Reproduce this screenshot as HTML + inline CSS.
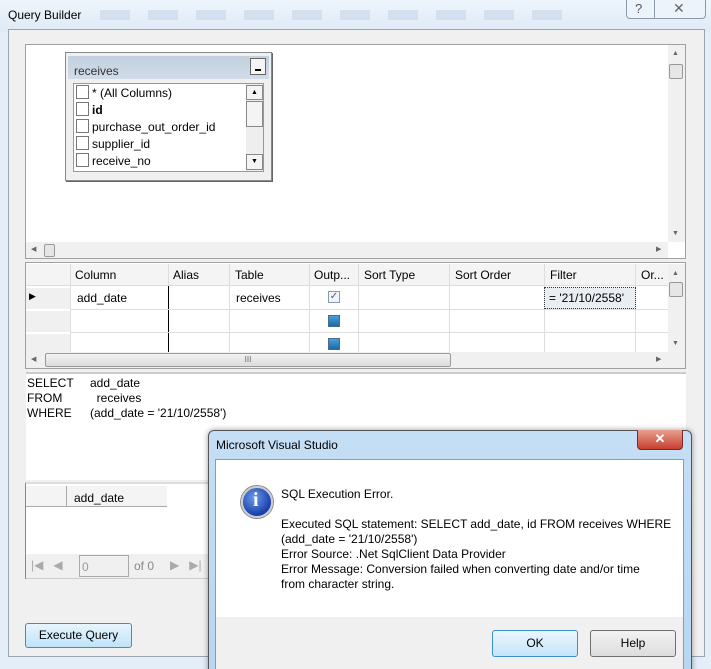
<!DOCTYPE html>
<html><head><style>
*{margin:0;padding:0;box-sizing:border-box}
html,body{width:711px;height:669px;overflow:hidden}
body{background:#e4eef8;font-family:"Liberation Sans",sans-serif;font-size:12px;color:#000;position:relative}
.a{position:absolute}
.t{white-space:nowrap}
</style></head><body>
<!-- title bar -->
<div class="a" style="left:0;top:0;width:711px;height:32px;background:linear-gradient(#eef5fc,#dfeaf6)"></div>
<div class="a t" style="left:8px;top:8px;font-size:12px">Query Builder</div>
<div class="a" style="left:100px;top:10px;width:480px;height:10px;background:repeating-linear-gradient(90deg,#cfdcec 0 30px,transparent 30px 48px);opacity:.8"></div>
<div class="a" style="left:626px;top:0;width:80px;height:19px;border:1px solid #8a9aaa;border-top:none;border-radius:0 0 4px 4px;background:#edf3fa"></div>
<div class="a" style="left:654px;top:0;width:1px;height:19px;background:#8a9aaa"></div>
<div class="a t" style="left:635px;top:1px;font-size:13px;color:#555">?</div>
<div class="a t" style="left:673px;top:0px;font-size:14px;color:#666">✕</div>
<!-- client -->
<div class="a" style="left:8px;top:29px;width:697px;height:628px;background:#f0f0f0;border:1px solid #9aa5b0"></div>
<!-- diagram pane -->
<div class="a" style="left:25px;top:44px;width:661px;height:215px;background:#fff;border:1px solid #a0a0a0"></div>
<div class="a" style="left:668px;top:45px;width:17px;height:197px;background:#f0f0f0"></div>
<div class="a" style="left:669px;top:64px;width:14px;height:15px;background:#e6e6e6;border:1px solid #999;border-radius:2px"></div>
<div class="a" style="left:26px;top:242px;width:642px;height:16px;background:#f0f0f0"></div>
<div class="a" style="left:44px;top:244px;width:11px;height:13px;background:#e6e6e6;border:1px solid #999;border-radius:2px"></div>
<div class="a t" style="left:672px;top:50px;font-size:7px;color:#666">▲</div>
<div class="a t" style="left:672px;top:230px;font-size:7px;color:#666">▼</div>
<div class="a t" style="left:31px;top:245px;font-size:7px;color:#666">◀</div>
<div class="a t" style="left:656px;top:245px;font-size:7px;color:#666">▶</div>
<!-- table box -->
<div class="a" style="left:65px;top:52px;width:207px;height:129px;background:#f0f0f0;border:1px solid #888;box-shadow:1px 1px 0 #666"></div>
<div class="a" style="left:68px;top:56px;width:201px;height:23px;background:linear-gradient(#c2d0df,#d1dce8)"></div>
<div class="a t" style="left:74px;top:64px;color:#333">receives</div>
<div class="a" style="left:250px;top:58px;width:16px;height:17px;background:#f4f4f4;border:1px solid #666"></div>
<div class="a" style="left:255px;top:69px;width:6px;height:2px;background:#000"></div>
<div class="a" style="left:73px;top:83px;width:191px;height:89px;background:#fff;border:1px solid #999"></div>
<div class="a" style="left:246px;top:84px;width:17px;height:87px;background:#eee"></div>
<div class="a" style="left:246px;top:85px;width:17px;height:15px;background:#f4f4f4;border:1px solid #888;font-size:7px;text-align:center;line-height:13px">▲</div>
<div class="a" style="left:246px;top:101px;width:17px;height:26px;background:#f4f4f4;border:1px solid #888"></div>
<div class="a" style="left:246px;top:154px;width:17px;height:16px;background:#f4f4f4;border:1px solid #888;font-size:7px;text-align:center;line-height:14px">▼</div>
<div class="a" style="left:76px;top:85px;width:13px;height:14px;border:1px solid #777"></div>
<div class="a" style="left:76px;top:102px;width:13px;height:14px;border:1px solid #777"></div>
<div class="a" style="left:76px;top:119px;width:13px;height:14px;border:1px solid #777"></div>
<div class="a" style="left:76px;top:136px;width:13px;height:14px;border:1px solid #777"></div>
<div class="a" style="left:76px;top:153px;width:13px;height:14px;border:1px solid #777"></div>
<div class="a t" style="left:92px;top:86px">* (All Columns)</div>
<div class="a t" style="left:92px;top:103px;font-weight:bold">id</div>
<div class="a t" style="left:92px;top:120px">purchase_out_order_id</div>
<div class="a t" style="left:92px;top:137px">supplier_id</div>
<div class="a t" style="left:92px;top:154px">receive_no</div>
<!-- grid pane -->
<div class="a" style="left:25px;top:262px;width:661px;height:107px;background:#fff;border:1px solid #a0a0a0"></div>
<div class="a" style="left:26px;top:264px;width:643px;height:22px;background:#f4f4f4;border-bottom:1px solid #ddd"></div>
<div class="a" style="left:26px;top:286px;width:44px;height:66px;background:repeating-linear-gradient(#fff 0 2px,#f0f0f0 2px 23px)"></div>
<div class="a" style="left:70px;top:264px;width:1px;height:88px;background:#ddd"></div>
<div class="a" style="left:168px;top:286px;width:1px;height:66px;background:#000"></div>
<div class="a" style="left:168px;top:264px;width:1px;height:22px;background:#ddd"></div>
<div class="a" style="left:229px;top:264px;width:1px;height:88px;background:#ddd"></div>
<div class="a" style="left:309px;top:264px;width:1px;height:88px;background:#ddd"></div>
<div class="a" style="left:358px;top:264px;width:1px;height:88px;background:#ddd"></div>
<div class="a" style="left:449px;top:264px;width:1px;height:88px;background:#ddd"></div>
<div class="a" style="left:544px;top:264px;width:1px;height:88px;background:#ddd"></div>
<div class="a" style="left:635px;top:264px;width:1px;height:88px;background:#ddd"></div>
<div class="a" style="left:70px;top:309px;width:598px;height:1px;background:#ddd"></div>
<div class="a" style="left:70px;top:332px;width:598px;height:1px;background:#ddd"></div>
<div class="a t" style="left:75px;top:268px">Column</div>
<div class="a t" style="left:173px;top:268px">Alias</div>
<div class="a t" style="left:235px;top:268px">Table</div>
<div class="a t" style="left:314px;top:268px">Outp...</div>
<div class="a t" style="left:364px;top:268px">Sort Type</div>
<div class="a t" style="left:455px;top:268px">Sort Order</div>
<div class="a t" style="left:550px;top:268px">Filter</div>
<div class="a t" style="left:641px;top:268px">Or...</div>
<div class="a t" style="left:29px;top:291px;font-size:9px">▶</div>
<div class="a t" style="left:77px;top:291px">add_date</div>
<div class="a t" style="left:236px;top:291px">receives</div>
<div class="a" style="left:328px;top:291px;width:12px;height:12px;border:1px solid #8a9ab0;background:#f0f4f8;font-size:10px;line-height:10px;text-align:center;color:#557">✓</div>
<div class="a" style="left:328px;top:315px;width:12px;height:12px;border:1px solid #4a6a8a;background:linear-gradient(#4aa0d8,#1a6aa8)"></div>
<div class="a" style="left:328px;top:338px;width:12px;height:12px;border:1px solid #4a6a8a;background:linear-gradient(#4aa0d8,#1a6aa8)"></div>
<div class="a" style="left:544px;top:287px;width:92px;height:22px;border:1px dotted #333;background:#eaeef2"></div>
<div class="a t" style="left:549px;top:291px">= '21/10/2558'</div>
<div class="a" style="left:668px;top:264px;width:17px;height:88px;background:#f0f0f0"></div>
<div class="a" style="left:669px;top:282px;width:14px;height:15px;background:#e6e6e6;border:1px solid #999;border-radius:2px"></div>
<div class="a t" style="left:672px;top:270px;font-size:7px;color:#666">▲</div>
<div class="a t" style="left:672px;top:340px;font-size:7px;color:#666">▼</div>
<div class="a" style="left:26px;top:352px;width:659px;height:16px;background:#f0f0f0"></div>
<div class="a t" style="left:31px;top:355px;font-size:7px;color:#666">◀</div>
<div class="a t" style="left:656px;top:355px;font-size:7px;color:#666">▶</div>
<div class="a" style="left:45px;top:353px;width:406px;height:14px;background:linear-gradient(#f2f2f2,#dcdcdc);border:1px solid #999;border-radius:2px;font-size:8px;text-align:center;line-height:12px;color:#666">III</div>
<!-- sql pane -->
<div class="a" style="left:26px;top:372px;width:660px;height:108px;background:#fff;border-top:2px solid #ccc"></div>
<div class="a t" style="left:27px;top:376px;line-height:15px">SELECT<br>FROM<br>WHERE</div>
<div class="a t" style="left:90px;top:376px;line-height:15px">add_date<br>&nbsp;&nbsp;receives<br>(add_date = '21/10/2558')</div>
<!-- results -->
<div class="a" style="left:25px;top:482px;width:660px;height:97px;background:#fff;border-left:1px solid #888;border-top:2px solid #ddd"></div>
<div class="a" style="left:26px;top:486px;width:141px;height:21px;background:#f4f4f4;border-bottom:1px solid #aaa"></div>
<div class="a" style="left:66px;top:486px;width:1px;height:21px;background:#aaa"></div>
<div class="a t" style="left:74px;top:491px">add_date</div>
<div class="a" style="left:26px;top:554px;width:659px;height:25px;background:#f0f0f0;border-bottom:1px solid #ccc"></div>
<div class="a t" style="left:31px;top:558px;color:#aaa;font-size:12px">|◀ &nbsp;&nbsp;◀</div>
<div class="a" style="left:79px;top:555px;width:50px;height:22px;border:1px solid #aaa;background:#f0f0f0;color:#999;padding:4px 2px">0</div>
<div class="a t" style="left:134px;top:559px;color:#888">of 0</div>
<div class="a t" style="left:170px;top:558px;color:#aaa">▶ &nbsp;&nbsp;▶|</div>
<!-- execute btn -->
<div class="a" style="left:25px;top:623px;width:107px;height:25px;border:1px solid #3c8fc8;border-radius:3px;background:linear-gradient(#e8f5fd,#bfe3f8);text-align:center;line-height:23px">Execute Query</div>
<!-- dialog -->
<div class="a" style="left:208px;top:430px;width:484px;height:245px;background:linear-gradient(#c4def5,#b8d6f2);border:1px solid #555;border-radius:6px 6px 0 0;box-shadow:0 0 6px rgba(0,0,0,.4)"></div>
<div class="a t" style="left:216px;top:438px;font-size:12px">Microsoft Visual Studio</div>
<div class="a" style="left:637px;top:430px;width:46px;height:20px;background:linear-gradient(#e8a090,#c84030);border:1px solid #7a2a20;border-top:none;border-radius:0 0 4px 4px;color:#fff;font-weight:bold;text-align:center;line-height:18px;font-size:13px">✕</div>
<div class="a" style="left:215px;top:459px;width:469px;height:215px;background:#f0f0f0;border:1px solid #8a9ab0"></div>
<div class="a" style="left:216px;top:460px;width:467px;height:157px;background:#fff"></div>
<div class="a" style="left:241px;top:486px;width:32px;height:32px;border-radius:50%;background:radial-gradient(circle at 40% 35%,#6a9ae8,#1a3eaa 70%);border:2px solid #c8ccd4;box-shadow:0 0 0 1px #888"></div>
<div class="a t" style="left:253px;top:489px;color:#fff;font-weight:bold;font-family:'Liberation Serif',serif;font-size:20px">i</div>
<div class="a t" style="left:281px;top:487px">SQL Execution Error.</div>
<div class="a t" style="left:281px;top:517px;line-height:15px">Executed SQL statement: SELECT add_date, id FROM receives WHERE<br>(add_date = '21/10/2558')<br>Error Source: .Net SqlClient Data Provider<br>Error Message: Conversion failed when converting date and/or time<br>from character string.</div>
<div class="a" style="left:492px;top:630px;width:86px;height:27px;border:1px solid #3c8fc8;border-radius:3px;background:linear-gradient(#eaf6fd,#c4e5f8);text-align:center;line-height:25px">OK</div>
<div class="a" style="left:590px;top:630px;width:86px;height:27px;border:1px solid #707070;border-radius:3px;background:linear-gradient(#f2f2f2,#dddddd);text-align:center;line-height:25px">Help</div>
</body></html>
